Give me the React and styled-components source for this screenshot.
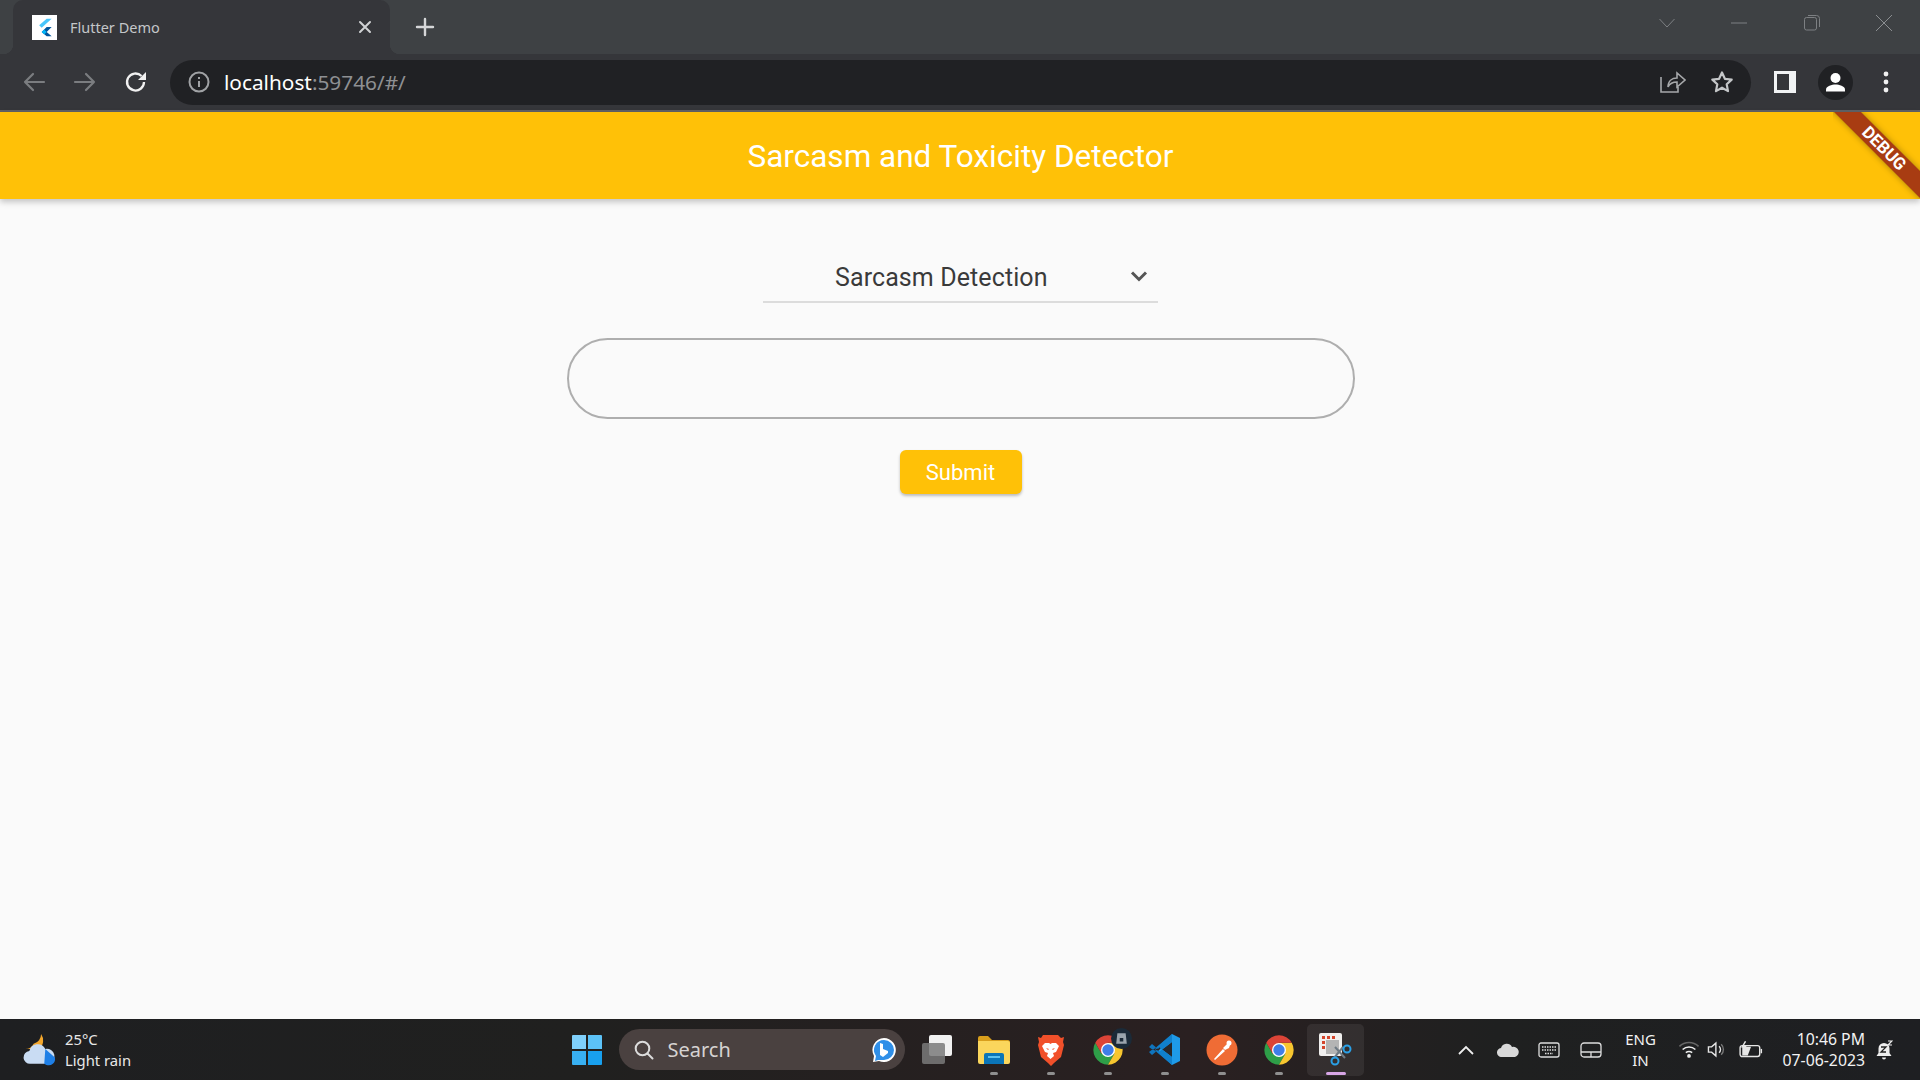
import React from 'react'
import styled, { createGlobalStyle } from 'styled-components'

const GlobalStyle = createGlobalStyle`
  html, body {
    margin: 0;
    padding: 0;
    height: 100%;
    overflow: hidden;
    background: #fafafa;
  }
  * {
    box-sizing: border-box;
  }
`

const Screen = styled.div`
  width: 1920px;
  height: 1080px;
  display: flex;
  flex-direction: column;
  font-family: Roboto, sans-serif;
`

/* browser chrome */
const TabStrip = styled.div`
  height: 54px;
  background: #3e4144;
  display: flex;
  align-items: stretch;
  padding-left: 13px;
  flex-shrink: 0;
`
const Tab = styled.div`
  width: 377px;
  background: #35363a;
  border-radius: 10px 10px 0 0;
  display: flex;
  align-items: center;
  padding: 0 0 0 19px;
  position: relative;
  &::before,
  &::after {
    content: '';
    position: absolute;
    bottom: 0;
    width: 10px;
    height: 10px;
  }
  &::before {
    left: -10px;
    background: radial-gradient(circle at 0 0, transparent 10px, #35363a 10.5px);
  }
  &::after {
    right: -10px;
    background: radial-gradient(circle at 100% 0, transparent 10px, #35363a 10.5px);
  }
`
const Favicon = styled.div`
  width: 25px;
  height: 25px;
  background: #fff;
  display: flex;
  align-items: center;
  justify-content: center;
  margin-right: 13px;
`
const TabTitle = styled.span`
  font-family: 'Noto Sans', sans-serif;
  font-size: 14.5px;
  color: #c4c7c9;
  flex: 1;
`
const TabClose = styled.div`
  width: 14px;
  height: 14px;
  margin-right: 18px;
  display: flex;
`
const NewTab = styled.div`
  width: 20px;
  height: 20px;
  margin: 17px 0 0 25px;
  display: flex;
`
const WindowControls = styled.div`
  margin-left: auto;
  display: flex;
  align-items: flex-start;
  padding-top: 14px;
`
const WindowButton = styled.div`
  width: 72.3px;
  height: 18px;
  display: flex;
  justify-content: center;
`
const Toolbar = styled.div`
  height: 58px;
  background: #35363a;
  border-bottom: 2px solid #5f6165;
  display: flex;
  align-items: center;
  flex-shrink: 0;
`
const NavButton = styled.div`
  width: 51px;
  display: flex;
  justify-content: center;
  &:first-child {
    margin-left: 8px;
  }
`
const Omnibox = styled.div`
  width: 1581px;
  height: 45px;
  margin: 1px 0 0 9px;
  background: #202124;
  border-radius: 23px;
  display: flex;
  align-items: center;
  padding: 0 0 1px 18px;
`
const Url = styled.span`
  font-family: 'Noto Sans', sans-serif;
  font-size: 20.8px;
  margin-left: 14px;
  color: #fff;
  flex: 1;
  & span {
    color: #8e9093;
  }
`
const OmniAction = styled.div`
  width: 50px;
  display: flex;
  justify-content: center;
  margin-right: ${p => p.$gap}px;
`
const ToolIcons = styled.div`
  display: flex;
  align-items: center;
  padding-left: 9px;
`
const ToolButton = styled.div`
  width: 50.5px;
  display: flex;
  justify-content: center;
`

/* flutter app */
const AppBar = styled.header`
  height: 87px;
  padding-top: 2px;
  background: #ffc107;
  box-shadow: 0 3px 6px rgba(0, 0, 0, 0.22);
  display: flex;
  align-items: center;
  justify-content: center;
  position: relative;
  flex-shrink: 0;
  z-index: 1;
`
const AppTitle = styled.h1`
  margin: 0 0 0 1px;
  font-size: 31.5px;
  font-weight: 400;
  color: #fff;
`
const BannerClip = styled.div`
  position: absolute;
  top: 0;
  right: 0;
  width: 87px;
  height: 87px;
  overflow: hidden;
`
const Banner = styled.div`
  position: absolute;
  top: 26.5px;
  left: -19px;
  width: 140px;
  height: 19px;
  transform: rotate(45deg);
  background: #a83c12;
  box-shadow: 0 0 6px rgba(0, 0, 0, 0.35);
  color: #fff;
  font-size: 17px;
  font-weight: 700;
  line-height: 19px;
  text-align: center;
`
const Main = styled.main`
  flex: 1;
  background: #fafafa;
  display: flex;
  flex-direction: column;
  align-items: center;
  padding: 54px 0 0 1px;
`
const Select = styled.div`
  width: 395px;
  height: 50px;
  border-bottom: 2px solid #dcdcdc;
  display: flex;
  align-items: center;
  justify-content: space-between;
  padding: 1px 7px 1px 72px;
  font-size: 25px;
  letter-spacing: 0.1px;
  color: #3a3a3a;
  & svg {
    margin-top: -2px;
  }
`
const TextBox = styled.div`
  width: 788px;
  height: 81px;
  margin-top: 35px;
  border: 2px solid #aeaeae;
  border-radius: 41px;
`
const SubmitButton = styled.button`
  width: 122px;
  height: 44px;
  margin-top: 31px;
  padding: 1px 0 0;
  border: 0;
  border-radius: 6px;
  background: #ffc107;
  color: #fff;
  font-family: Roboto, sans-serif;
  font-size: 22px;
  font-weight: 400;
  box-shadow: 0 2px 3px rgba(0, 0, 0, 0.25);
`

/* windows taskbar */
const Taskbar = styled.footer`
  height: 61px;
  background: linear-gradient(90deg, #1e1f21 0%, #20201f 30%, #2a2021 62%, #1f2020 78%, #1e1f22 100%);
  display: flex;
  align-items: center;
  flex-shrink: 0;
  font-family: 'Noto Sans', sans-serif;
  color: #f2f2f2;
`
const Weather = styled.div`
  width: 558px;
  display: flex;
  align-items: center;
  padding-left: 23px;
  gap: 8px;
`
const WeatherText = styled.div`
  font-size: 14.8px;
  line-height: 21px;
  color: #e8e8e8;
`
const Centre = styled.div`
  display: flex;
  align-items: center;
  height: 100%;
`
const TaskSlot = styled.div`
  width: 57px;
  height: 52px;
  border-radius: 5px;
  display: flex;
  align-items: center;
  justify-content: center;
  position: relative;
  background: ${p => (p.$active ? 'rgba(255, 255, 255, 0.07)' : 'transparent')};
  &::after {
    content: '';
    display: ${p => (p.$dot || p.$active ? 'block' : 'none')};
    position: absolute;
    bottom: 1px;
    left: 50%;
    transform: translateX(-50%);
    width: ${p => (p.$active ? '20px' : '8px')};
    height: 3px;
    border-radius: 2px;
    background: ${p => (p.$active ? '#d8a6e6' : '#8f8f8f')};
  }
`
const SearchPill = styled.div`
  width: 286px;
  height: 41px;
  margin: 0 3.5px;
  border-radius: 21px;
  background: #4a4140;
  display: flex;
  align-items: center;
  padding: 0 8px 0 15px;
  gap: 14px;
  font-size: 20px;
  color: #d6d3d2;
`
const SearchLabel = styled.span`
  flex: 1;
`
const Tray = styled.div`
  margin-left: auto;
  display: flex;
  align-items: center;
  padding-right: 27px;
`
const TrayIcon = styled.div`
  width: ${p => p.$w || 41.5}px;
  display: flex;
  justify-content: center;
`
const Lang = styled.div`
  width: 58px;
  margin-right: 5px;
  text-align: center;
  font-size: 15px;
  line-height: 21px;
`
const Clock = styled.div`
  text-align: right;
  font-size: 15.8px;
  line-height: 21px;
  margin: 0 10px 0 13px;
`

const strokeIcon = { fill: 'none', strokeLinecap: 'round', strokeLinejoin: 'round' }

const FlutterLogo = ({ size = 20 }) => (
  <svg width={size} height={size} viewBox="0 0 24 24">
    <path d="M14 2h6L8 13l-3-3z" fill="#47c5fb" />
    <path d="M14 12h6l-6 6 6 5h-6l-6-5z" fill="#00569e" />
    <path d="M8 18l3-3 3 3-3 3z" fill="#00b5f8" />
  </svg>
)

const ChromeLogo = ({ size = 32 }) => (
  <svg width={size} height={size} viewBox="0 0 48 48">
    <path d="M4.95 13A22 22 0 0 0 24 46l9.5-16.5h-19z" fill="#2e9e48" />
    <path d="M43.05 13H24l9.5 16.5L24 46A22 22 0 0 0 43.05 13z" fill="#f7c62f" />
    <path d="M24 13h19.05A22 22 0 0 0 4.95 13l9.55 16.5z" fill="#dc4437" />
    <circle cx="24" cy="24" r="10.5" fill="#fff" />
    <circle cx="24" cy="24" r="8.5" fill="#3f7ee8" />
  </svg>
)

const ChromeBadge = styled.div`
  position: absolute;
  top: 4px;
  right: 4px;
  width: 21px;
  height: 21px;
  border-radius: 50%;
  background: #1b2a38;
  display: flex;
  align-items: center;
  justify-content: center;
`

const TaskView = () => (
  <svg width="32" height="30" viewBox="0 0 32 30">
    <rect x="8" y="0" width="23" height="21" rx="2" fill="#f1f1f1" />
    <rect x="1" y="8" width="23" height="21" rx="2" fill="#7a7a7a" fillOpacity="0.85" />
  </svg>
)

const Folder = () => (
  <svg width="32" height="29" viewBox="0 0 32 29">
    <path d="M0 3a2 2 0 0 1 2-2h8l4 4h16a2 2 0 0 1 2 2v4H0z" fill="#d99f1c" />
    <path d="M0 6h30a2 2 0 0 1 2 2v19a2 2 0 0 1-2 2H2a2 2 0 0 1-2-2z" fill="#fbd65c" />
    <path d="M6 29V20a2 2 0 0 1 2-2h16a2 2 0 0 1 2 2v9z" fill="#0b75b8" />
    <rect x="10" y="21" width="12" height="2" fill="#5cc0ee" />
  </svg>
)

const Brave = () => (
  <svg width="27" height="32" viewBox="0 0 27 32">
    <path d="M6 1h15l3 3 3-1-1 5 1 3-3 12-7 6-3 3-3-3-7-6L1 11l1-3-1-5 3 1z" fill="#f1502a" />
    <path d="M8 9h4l1.500 1L15 9h4l3 3-3 6-3 1 1 3-3.500 3L10 22l1-3-3-1-3-6z" fill="#fff" />
    <path d="M9 14l3 1-1 1zM18 14l-3 1 1 1z" fill="#f1502a" />
  </svg>
)

const VsCode = () => (
  <svg width="33" height="33" viewBox="0 0 33 33">
    <path d="M24 1l8 4v23l-8 4-14-13.500z" fill="#1e9ae8" />
    <path d="M24 9v15l-10-7.500z" fill="#27272a" />
    <path d="M24 1L5 17 1 14l3-3 6 5zM24 32L5 16 1 19l3 3 6-5z" fill="#0f74bd" />
    <path d="M24 1v8L11 19l-4-3zM24 32v-8L11 14l-4 3z" fill="#1080cc" />
  </svg>
)

const Postman = () => (
  <svg width="32" height="32" viewBox="0 0 32 32">
    <circle cx="16" cy="16" r="15.500" fill="#ef6c35" />
    <path d="M8 25l9-10 2 2-10 9zM17 14l5-5 2 2-1 3-4 2z" fill="#fff" />
    <circle cx="23" cy="9" r="2.500" fill="#fff" />
  </svg>
)

const Snip = () => (
  <svg width="33" height="33" viewBox="0 0 33 33">
    <rect x="0" y="0" width="23" height="23" rx="2" fill="#f0efee" />
    <path d="M3 3h3v3H3zM8 3h3v3H8zM13 3h3v3h-3zM3 8h3v3H3zM3 13h3v3H3z" fill="#d4452c" />
    <rect x="7" y="7" width="13" height="14" fill="#b4b4b4" />
    <path d="M16 14l10 11M24 14L15 25" stroke="#6e7a84" strokeWidth="2" />
    <circle cx="28" cy="16" r="3.500" fill="none" stroke="#2aa0e6" strokeWidth="2" />
    <circle cx="16" cy="28" r="3.500" fill="none" stroke="#2aa0e6" strokeWidth="2" />
  </svg>
)

export default function App() {
  return (
    <Screen>
      <GlobalStyle />
      <TabStrip>
        <Tab>
          <Favicon>
            <FlutterLogo />
          </Favicon>
          <TabTitle>Flutter Demo</TabTitle>
          <TabClose>
            <svg width="14" height="14" viewBox="0 0 14 14" {...strokeIcon} stroke="#d0d2d4" strokeWidth="2">
              <path d="M2 2l10 10M12 2L2 12" />
            </svg>
          </TabClose>
        </Tab>
        <NewTab>
          <svg width="20" height="20" viewBox="0 0 20 20" stroke="#d5d6d8" strokeWidth="2.400" strokeLinecap="round">
            <path d="M10 2v16M2 10h16" />
          </svg>
        </NewTab>
        <WindowControls>
          <WindowButton>
            <svg width="18" height="18" viewBox="0 0 18 18" fill="none" stroke="#7d8083" strokeWidth="1">
              <path d="M1.500 5l7.500 8 7.500-8" />
            </svg>
          </WindowButton>
          <WindowButton>
            <svg width="18" height="18" viewBox="0 0 18 18" fill="none" stroke="#7d8083" strokeWidth="1">
              <path d="M1 9h16" />
            </svg>
          </WindowButton>
          <WindowButton>
            <svg width="18" height="18" viewBox="0 0 18 18" fill="none" stroke="#7d8083" strokeWidth="1">
              <rect x="1.500" y="3.500" width="12" height="12.500" rx="2" />
              <path d="M5 1.500h8.500a3 3 0 0 1 3 3V13" />
            </svg>
          </WindowButton>
          <WindowButton>
            <svg width="18" height="18" viewBox="0 0 18 18" fill="none" stroke="#8b8e91" strokeWidth="1">
              <path d="M1 1l16 16M17 1L1 17" />
            </svg>
          </WindowButton>
        </WindowControls>
      </TabStrip>

      <Toolbar>
        <NavButton>
          <svg width="24" height="24" viewBox="0 0 24 24" {...strokeIcon} stroke="#7b7d80" strokeWidth="2.200">
            <path d="M22 12H3M11 4l-8 8 8 8" />
          </svg>
        </NavButton>
        <NavButton>
          <svg width="24" height="24" viewBox="0 0 24 24" {...strokeIcon} stroke="#7b7d80" strokeWidth="2.200">
            <path d="M2 12h19M13 4l8 8-8 8" />
          </svg>
        </NavButton>
        <NavButton>
          <svg width="24" height="24" viewBox="0 0 24 24" fill="none">
            <path d="M20 12a8.500 8.500 0 1 1-2.500-6" stroke="#f1f1f1" strokeWidth="2.300" />
            <path d="M22 2v8h-8z" fill="#f1f1f1" />
          </svg>
        </NavButton>
        <Omnibox>
          <svg width="22" height="22" viewBox="0 0 22 22" fill="none" stroke="#a0a2a5" strokeWidth="2">
            <circle cx="11" cy="11" r="9.500" />
            <path d="M11 10v6M11 6v2" />
          </svg>
          <Url>
            localhost<span>:59746/#/</span>
          </Url>
          <OmniAction $gap={-1}>
            <svg width="26" height="24" viewBox="0 0 26 24" fill="none" stroke="#a6a8aa" strokeWidth="1.600">
              <path d="M1 7v15h17v-5M8 17c0-6 4-9 9-9V3l8 7-8 7v-5c-4 0-7 1-9 5z" />
            </svg>
          </OmniAction>
          <OmniAction $gap={4}>
            <svg width="24" height="24" viewBox="0 0 24 24" fill="none" stroke="#c4c6c8" strokeWidth="2.200" strokeLinejoin="round">
              <path d="M12 2.500l2.900 6.300 6.800.8-5 4.700 1.300 6.800-6-3.400-6 3.400 1.300-6.800-5-4.700 6.800-.8z" />
            </svg>
          </OmniAction>
        </Omnibox>
        <ToolIcons>
          <ToolButton>
            <svg width="22" height="22" viewBox="0 0 22 22">
              <rect width="22" height="22" fill="#f1f3f4" />
              <rect x="3" y="3" width="12" height="16" fill="#35363a" />
            </svg>
          </ToolButton>
          <ToolButton>
            <svg width="35" height="35" viewBox="0 0 35 35">
              <circle cx="17.500" cy="17.500" r="17.500" fill="#202124" />
              <circle cx="17.500" cy="13" r="5" fill="#fff" />
              <path d="M8 26.500v-2c0-3.500 6-5 9.500-5s9.500 1.500 9.500 5v2z" fill="#fff" />
            </svg>
          </ToolButton>
          <ToolButton>
            <svg width="6" height="22" viewBox="0 0 6 22" fill="#f1f1f1">
              <circle cx="3" cy="3" r="2.400" />
              <circle cx="3" cy="11" r="2.400" />
              <circle cx="3" cy="19" r="2.400" />
            </svg>
          </ToolButton>
        </ToolIcons>
      </Toolbar>

      <AppBar>
        <AppTitle>Sarcasm and Toxicity Detector</AppTitle>
        <BannerClip>
          <Banner>DEBUG</Banner>
        </BannerClip>
      </AppBar>

      <Main>
        <Select>
          Sarcasm Detection
          <svg width="24" height="24" viewBox="0 0 24 24" fill="none" stroke="#555" strokeWidth="3">
            <path d="M5 8.500l7 7 7-7" />
          </svg>
        </Select>
        <TextBox />
        <SubmitButton>Submit</SubmitButton>
      </Main>

      <Taskbar>
        <Weather>
          <svg width="34" height="34" viewBox="0 0 32 32">
            <path d="M17 1a10 10 0 0 1-2 14H1a9 9 0 0 0 9-5 9 9 0 0 0 7-9z" fill="#f4a72c" />
            <path d="M7 29a6 6 0 0 1-1-12 8 8 0 0 1 15-2 7 7 0 0 1 3 14z" fill="#c9dcf3" />
            <path d="M21 15l9 8a6 6 0 0 1-8 7l-2-1z" fill="#1e7fe6" />
          </svg>
          <WeatherText>
            25°C
            <br />
            Light rain
          </WeatherText>
        </Weather>
        <Centre>
          <TaskSlot>
            <svg width="30" height="30" viewBox="0 0 30 30">
              <path d="M0 1a1 1 0 0 1 1-1h13v14H0z" fill="#7fd0fb" />
              <path d="M16 0h13a1 1 0 0 1 1 1v13H16z" fill="#5cc2f7" />
              <path d="M0 16h14v14H1a1 1 0 0 1-1-1z" fill="#38b0f2" />
              <path d="M16 16h14v13a1 1 0 0 1-1 1H16z" fill="#18a0ee" />
            </svg>
          </TaskSlot>
          <SearchPill>
            <svg width="20" height="20" viewBox="0 0 20 20" fill="none" stroke="#dcdcdc" strokeWidth="2" strokeLinecap="round">
              <circle cx="8.500" cy="8.500" r="6.800" />
              <path d="M13.500 13.500l5 5" />
            </svg>
            <SearchLabel>Search</SearchLabel>
            <svg width="26" height="26" viewBox="0 0 26 26">
              <path d="M13 1a12 12 0 1 1-5 23l-6 1 1-6A12 12 0 0 1 13 1z" fill="#fff" />
              <path d="M13 3a10 10 0 0 1 0 20H7l-3 1 1-5a10 10 0 0 1 8-16z" fill="#2f8fe8" />
              <path d="M9 6l3 1v5l5 2v2l-5 4-3-2z" fill="#fff" />
            </svg>
          </SearchPill>
          <TaskSlot>
            <TaskView />
          </TaskSlot>
          <TaskSlot $dot>
            <Folder />
          </TaskSlot>
          <TaskSlot $dot>
            <Brave />
          </TaskSlot>
          <TaskSlot $dot>
            <ChromeLogo />
            <ChromeBadge>
              <svg width="13" height="13" viewBox="0 0 11 11" fill="#9aa4ad">
                <path d="M2 1h7l1 9H1zM4 5v3h3V5z" />
              </svg>
            </ChromeBadge>
          </TaskSlot>
          <TaskSlot $dot>
            <VsCode />
          </TaskSlot>
          <TaskSlot $dot>
            <Postman />
          </TaskSlot>
          <TaskSlot $dot>
            <ChromeLogo />
          </TaskSlot>
          <TaskSlot $active>
            <Snip />
          </TaskSlot>
        </Centre>
        <Tray>
          <TrayIcon>
            <svg width="16" height="10" viewBox="0 0 16 10" fill="none" stroke="#eee" strokeWidth="1.800">
              <path d="M1 9l7-7 7 7" />
            </svg>
          </TrayIcon>
          <TrayIcon>
            <svg width="22" height="14" viewBox="0 0 22 14" fill="#d8d8d8">
              <path d="M5 14a4.500 4.500 0 0 1-1-9 6 6 0 0 1 11-1 5 5 0 0 1 3 10z" />
            </svg>
          </TrayIcon>
          <TrayIcon>
            <svg width="22" height="16" viewBox="0 0 22 16" fill="none" stroke="#ddd" strokeWidth="1.300">
              <rect x="1" y="1" width="20" height="14" rx="2" />
              <path d="M4 5h14M4 8h14M7 11.500h8" strokeDasharray="1.500 1" />
            </svg>
          </TrayIcon>
          <TrayIcon>
            <svg width="22" height="16" viewBox="0 0 22 16" fill="none" stroke="#ddd" strokeWidth="1.300">
              <rect x="1" y="1" width="20" height="14" rx="3" />
              <path d="M1 10h20M11 10v5" />
            </svg>
          </TrayIcon>
          <Lang>
            ENG
            <br />
            IN
          </Lang>
          <TrayIcon $w={29}>
            <svg width="22" height="17" viewBox="0 0 20 16" fill="none" stroke="#eee" strokeWidth="1.500">
              <path d="M1 5a13 13 0 0 1 18 0" stroke="#666" />
              <path d="M4 8a9 9 0 0 1 12 0M7 11a5 5 0 0 1 6 0" />
              <circle cx="10" cy="14" r="1" fill="#eee" />
            </svg>
          </TrayIcon>
          <TrayIcon $w={29}>
            <svg width="22" height="17" viewBox="0 0 20 16" fill="none" stroke="#e6e6e6" strokeWidth="1.300">
              <path d="M1 5.500v5h3l4 3.500V2L4 5.500z" />
              <path d="M11 5a4 4 0 0 1 0 6" />
              <path d="M13 3a7 7 0 0 1 0 10" stroke="#777" />
            </svg>
          </TrayIcon>
          <TrayIcon $w={37}>
            <svg width="24" height="18" viewBox="0 0 22 16" fill="none" stroke="#e6e6e6" strokeWidth="1.300">
              <rect x="1" y="4" width="18" height="10" rx="2" />
              <path d="M3 5h8l-3 8H3z" fill="#e6e6e6" stroke="none" />
              <path d="M20.500 7v4" />
              <path d="M6 0L3 5h3l-1 4" />
            </svg>
          </TrayIcon>
          <Clock>
            10:46 PM
            <br />
            07-06-2023
          </Clock>
          <svg width="18" height="20" viewBox="0 0 18 20">
            <path d="M9 3a5.500 5.500 0 0 1 5.500 5.500V13l2 3h-15l2-3V8.500A5.500 5.500 0 0 1 9 3z" fill="#eee" />
            <path d="M7 17.500h4a2 2 0 0 1-4 0z" fill="#eee" />
            <path d="M6 7h5l-5 5h5" fill="none" stroke="#222" strokeWidth="1.300" />
            <path d="M13 1h4l-4 4h4" fill="none" stroke="#eee" strokeWidth="1.200" />
          </svg>
        </Tray>
      </Taskbar>
    </Screen>
  )
}
